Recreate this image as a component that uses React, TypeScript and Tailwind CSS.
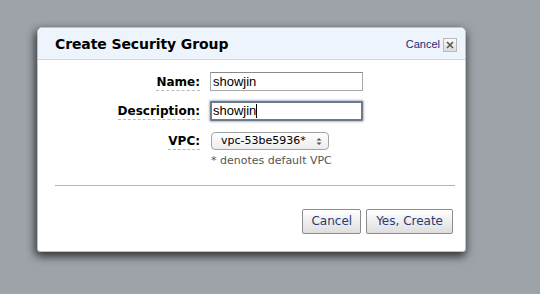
export default function App() {
  return (
    <div className="w-[540px] h-[294px] bg-[#9da3a9] pt-[27px] pl-[37px] overflow-hidden" style={{ fontFamily: '"DejaVu Sans", Verdana, sans-serif' }}>
      <div className="w-[429px] h-[225px] bg-white rounded-t-[5px] rounded-b-[3px] border border-[#a9c6e6] shadow-[0_4px_10px_rgba(0,0,0,0.55),-3px_3px_8px_rgba(0,0,0,0.35)] flex flex-col">
        <div className="h-[32px] bg-[#eef4fc] border-b border-[#c4d8ef] rounded-t-[5px] flex items-center pl-[17px] pr-[8px]">
          <div className="text-[14px] font-bold text-black tracking-[-0.1px] pt-[2px]">Create Security Group</div>
          <div className="ml-auto flex items-center gap-[3px] pt-[2px]">
            <span className="text-[11px] text-[#1c2a7a]" style={{ fontFamily: '"Liberation Sans", Arial, sans-serif' }}>Cancel</span>
            <span className="w-[14px] h-[14px] border border-[#b9b9b9] bg-gradient-to-b from-[#fafafa] to-[#dcdcdc] flex items-center justify-center">
              <svg width="8" height="8" viewBox="0 0 8 8"><path d="M1 1L7 7M7 1L1 7" stroke="#555" strokeWidth="1.6" /></svg>
            </span>
          </div>
        </div>
        <div className="flex flex-col pt-[12px]">
          <div className="flex items-start h-[29px]">
            <div className="w-[162px] text-right text-[12px] font-bold text-black pt-[1px]">
              <span className="border-b border-dashed border-[#bbb] pb-[1px]">Name:</span>
            </div>
            <div className="pl-[10px]">
              <div className="w-[153px] h-[19px] border border-[#a8a8a8] border-t-[#8a8a8a] text-[13px] leading-[17px] pl-[2px] text-black" style={{ fontFamily: '"Liberation Sans", Arial, sans-serif' }}>showjin</div>
            </div>
          </div>
          <div className="flex items-start h-[31px]">
            <div className="w-[162px] text-right text-[12px] font-bold text-black pt-[1px]">
              <span className="border-b border-dashed border-[#bbb] pb-[1px]">Description:</span>
            </div>
            <div className="pl-[10px]">
              <div className="w-[153px] h-[20px] border-[2px] border-[#6e7a88] shadow-[0_0_2px_1px_rgba(120,140,170,0.6)] rounded-[1px] text-[13px] leading-[16px] pl-[1px] text-black flex items-center" style={{ fontFamily: '"Liberation Sans", Arial, sans-serif' }}>
                showjin<span className="w-[1px] h-[14px] bg-black" />
              </div>
            </div>
          </div>
          <div className="flex items-start">
            <div className="w-[162px] text-right text-[12px] font-bold text-black">
              <span className="border-b border-dashed border-[#bbb] pb-[1px]">VPC:</span>
            </div>
            <div className="pl-[11px] flex flex-col">
              <div className="w-[118px] h-[18px] border border-[#a5a5a5] rounded-[4px] bg-gradient-to-b from-white to-[#ececec] flex items-center pl-[9px] pr-[6px] text-[11px] text-black">
                <span>vpc-53be5936*</span>
                <svg className="ml-auto" width="6" height="9" viewBox="0 0 6 9"><path d="M0.5 3.5L3 1L5.5 3.5Z M0.5 5.5L3 8L5.5 5.5Z" fill="#555" /></svg>
              </div>
              <div className="text-[11px] text-[#555] mt-[3px]">* denotes default VPC</div>
            </div>
          </div>
          <div className="ml-[17px] mr-[10px] mt-[15px] h-[1px] bg-[#b5b5b5]" />
          <div className="flex justify-end gap-[5px] pr-[12px] mt-[23px]">
            <button className="h-[25px] px-[8px] border border-[#8c8c8c] rounded-[2px] bg-gradient-to-b from-white to-[#dedede] text-[12px] text-[#1e3c78]">Cancel</button>
            <button className="h-[25px] px-[9px] border border-[#8c8c8c] rounded-[2px] bg-gradient-to-b from-white to-[#dedede] text-[12px] text-[#1e3c78]">Yes, Create</button>
          </div>
        </div>
      </div>
    </div>
  );
}
